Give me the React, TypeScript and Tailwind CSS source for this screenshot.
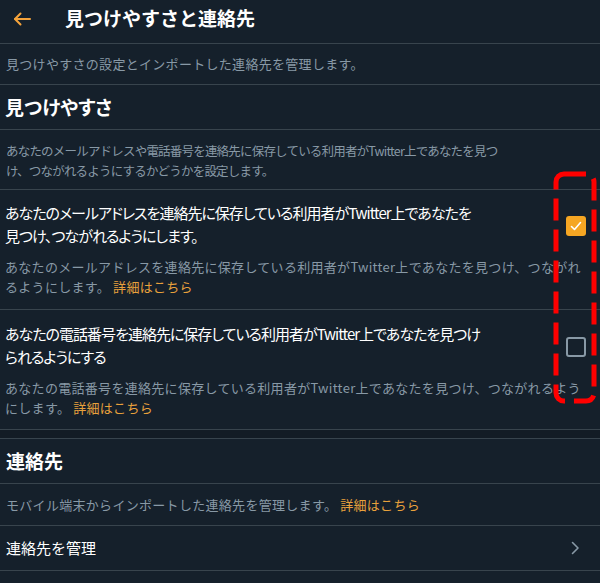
import React, { useState } from 'react';

const font = { fontFamily: '"Noto Sans CJK JP", "Noto Sans", sans-serif' };

const BackArrow = () => (
  <svg width="20" height="16" viewBox="0 0 20 16" fill="none" stroke="#f5a33b" strokeWidth="2" strokeLinecap="round" strokeLinejoin="round">
    <path d="M18 8H3" />
    <path d="M8.5 2.5L3 8l5.5 5.5" />
  </svg>
);

const Chevron = () => (
  <svg width="10" height="16" viewBox="0 0 10 16" fill="none" stroke="#8899a6" strokeWidth="1.6" strokeLinecap="round" strokeLinejoin="round">
    <path d="M2.5 2.5L8 8l-5.5 5.5" />
  </svg>
);

const Checkbox: React.FC<{ checked: boolean; onChange: () => void }> = ({ checked, onChange }) => (
  <button
    onClick={onChange}
    className={
      checked
        ? 'w-[20px] h-[20px] rounded-[3px] bg-[#f5a623] flex items-center justify-center'
        : 'w-[20px] h-[20px] rounded-[3px] border-2 border-[#8899a6] bg-transparent'
    }
  >
    {checked && (
      <svg width="14" height="14" viewBox="0 0 14 14" fill="none" stroke="#fff" strokeWidth="1.6" strokeLinecap="round" strokeLinejoin="round">
        <path d="M2.5 7.5l3 3 6-7" />
      </svg>
    )}
  </button>
);

const Link = () => <span className="text-[#e8a13c] ml-[3px]">詳細はこちら</span>;

export default function App() {
  const [byEmail, setByEmail] = useState(true);
  const [byPhone, setByPhone] = useState(false);

  return (
    <div className="relative w-[600px] h-[583px] overflow-hidden bg-[#15202b] text-white" style={font}>
      {/* Header */}
      <div className="h-[44px] flex items-center pb-[6px] border-b border-[#38444d]">
        <div className="w-[65px] pl-[12px] flex items-center">
          <BackArrow />
        </div>
        <h1 className="text-[19px] font-bold">見つけやすさと連絡先</h1>
      </div>
      <div className="h-[41px] flex items-center px-[6px] border-b border-[#38444d] text-[13px] tracking-[0.3px] text-[#8899a6]">
        見つけやすさの設定とインポートした連絡先を管理します。
      </div>

      {/* 見つけやすさ */}
      <div className="h-[45px] flex items-center px-[5px] border-b border-[#38444d]">
        <h2 className="text-[19px] font-bold [font-feature-settings:'palt']">見つけやすさ</h2>
      </div>
      <div className="h-[60px] pt-[11px] px-[6px] border-b border-[#38444d]">
        <p className="w-[492px] text-[12.5px] tracking-[-0.8px] leading-[20px] text-[#8899a6]">
          あなたのメールアドレスや電話番号を連絡先に保存している利用者がTwitter上であなたを見つけ、つながれるようにするかどうかを設定します。
        </p>
      </div>

      <div className="h-[120px] pt-[11px] pl-[5px] pr-[14px] border-b border-[#38444d]">
        <div className="flex items-start justify-between">
          <p className="w-[477px] text-[15px] tracking-[-1px] leading-[23px] [font-feature-settings:'palt']">
            あなたのメールアドレスを連絡先に保存している利用者がTwitter上であなたを見つけ、つながれるようにします。
          </p>
          <div className="mt-[15px]">
            <Checkbox checked={byEmail} onChange={() => setByEmail(!byEmail)} />
          </div>
        </div>
        <p className="mt-[10px] text-[13px] tracking-[0.3px] leading-[20px] text-[#8899a6]">
          あなたのメールアドレスを連絡先に保存している利用者がTwitter上であなたを見つけ、つながれるようにします。
          <Link />
        </p>
      </div>

      <div className="h-[120px] pt-[12px] pl-[5px] pr-[14px] border-b border-[#38444d]">
        <div className="flex items-start justify-between">
          <p className="w-[477px] text-[15px] tracking-[-1px] leading-[23px] [font-feature-settings:'palt']">
            あなたの電話番号を連絡先に保存している利用者がTwitter上であなたを見つけられるようにする
          </p>
          <div className="mt-[14px]">
            <Checkbox checked={byPhone} onChange={() => setByPhone(!byPhone)} />
          </div>
        </div>
        <p className="mt-[10px] text-[13px] tracking-[0.3px] leading-[20px] text-[#8899a6]">
          あなたの電話番号を連絡先に保存している利用者がTwitter上であなたを見つけ、つながれるようにします。
          <Link />
        </p>
      </div>

      {/* section gap */}
      <div className="h-[9px] bg-[#131c25] border-b border-[#38444d]" />

      {/* 連絡先 */}
      <div className="h-[45px] flex items-center px-[6px] border-b border-[#38444d]">
        <h2 className="text-[19px] font-bold">連絡先</h2>
      </div>
      <div className="h-[42px] flex items-center px-[6px] border-b border-[#38444d] text-[13px] tracking-[0.3px] text-[#8899a6]">
        モバイル端末からインポートした連絡先を管理します。
        <Link />
      </div>
      <div className="h-[45px] flex items-center justify-between pl-[6px] pr-[20px] border-b border-[#38444d]">
        <span className="text-[15px]">連絡先を管理</span>
        <Chevron />
      </div>

      {/* annotation overlay */}
      <svg className="absolute left-[553px] top-[171px] pointer-events-none" width="46" height="233" viewBox="0 0 46 233" fill="none">
        <rect x="3" y="3" width="38" height="227" rx="8" stroke="#ff0000" strokeWidth="5" strokeDasharray="22 9" />
      </svg>
    </div>
  );
}
